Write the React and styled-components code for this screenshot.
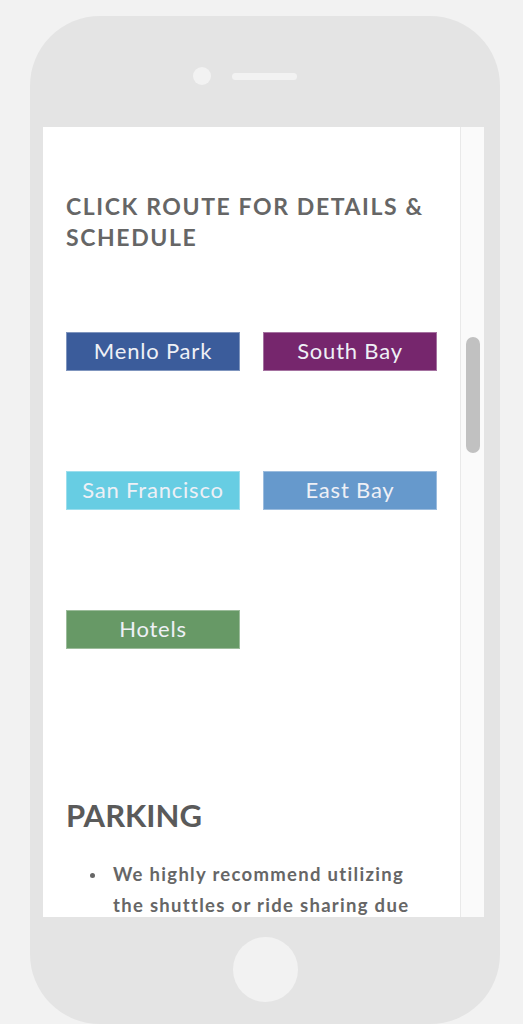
import React from "react";
import styled, { createGlobalStyle } from "styled-components";

const Global = createGlobalStyle`
  html, body { margin: 0; padding: 0; background: #f2f2f2; }
  body { overflow: hidden; height: 1024px; }
`;

const Phone = styled.div`
  margin: 16px 0 0 30px;
  width: 470px;
  height: 1008px;
  background: #e4e4e4;
  border-radius: 70px;
  display: flex;
  flex-direction: column;
  box-sizing: border-box;
`;

const TopBar = styled.div`
  height: 111px;
  display: flex;
  align-items: flex-start;
  padding: 51px 0 0 163px;
  box-sizing: border-box;
  gap: 21px;
`;

const Camera = styled.div`
  width: 18px;
  height: 18px;
  border-radius: 50%;
  background: #f2f2f2;
`;

const Speaker = styled.div`
  margin-top: 6px;
  width: 65px;
  height: 7px;
  border-radius: 4px;
  background: #f2f2f2;
`;

const Screen = styled.div`
  margin-left: 13px;
  width: 441px;
  height: 790px;
  display: flex;
  overflow: hidden;
`;

const Content = styled.div`
  flex: 1;
  background: #fff;
  padding: 64px 0 0 23px;
  box-sizing: border-box;
  font-family: "Lato", "Open Sans", sans-serif;
`;

const Track = styled.div`
  width: 24px;
  background: #fafafa;
  border-left: 1px solid #e9e9e9;
  box-sizing: border-box;
  padding: 210px 0 0 5px;
`;

const Thumb = styled.div`
  width: 14px;
  height: 116px;
  border-radius: 7px;
  background: #c1c1c1;
`;

const Heading = styled.h2`
  margin: 0;
  width: 385px;
  font-size: 23px;
  line-height: 31px;
  font-weight: 700;
  color: #666;
  letter-spacing: 1.6px;
`;

const Grid = styled.div`
  margin-top: 79px;
  display: grid;
  grid-template-columns: 174px 174px;
  column-gap: 23px;
  row-gap: 100px;
`;

const RouteButton = styled.a`
  display: flex;
  align-items: center;
  justify-content: center;
  height: 39px;
  padding-bottom: 3px;
  background: ${(p) => p.$bg};
  border: 1px solid rgba(255, 255, 255, 0.35);
  box-sizing: border-box;
  color: #eef0f6;
  font-size: 22px;
  font-weight: 400;
  letter-spacing: 0.8px;
  text-decoration: none;
  white-space: nowrap;
`;

const SectionTitle = styled.h2`
  margin: 146px 0 0 0;
  font-size: 31px;
  line-height: 40px;
  font-weight: 700;
  color: #5a5a5a;
`;

const List = styled.ul`
  margin: 24px 0 0 0;
  padding: 0 0 0 24px;
  list-style: none;
`;

const Item = styled.li`
  position: relative;
  padding-left: 23px;
  width: 305px;
  font-size: 18.5px;
  line-height: 31px;
  font-weight: 700;
  color: #666;
  letter-spacing: 1.3px;

  &::before {
    content: "";
    position: absolute;
    left: 0;
    top: 14px;
    width: 5px;
    height: 5px;
    border-radius: 50%;
    background: #666;
  }
`;

const Bottom = styled.div`
  flex: 1;
  display: flex;
  justify-content: center;
  padding-top: 20px;
  padding-left: 0px;
`;

const HomeButton = styled.div`
  width: 65px;
  height: 65px;
  border-radius: 50%;
  background: #f2f2f2;
`;

const routes = [
  { label: "Menlo Park", bg: "#3b5c9b" },
  { label: "South Bay", bg: "#76266d" },
  { label: "San Francisco", bg: "#67cde3" },
  { label: "East Bay", bg: "#6699cc" },
  { label: "Hotels", bg: "#679966" },
];

export default function App() {
  return (
    <>
      <Global />
      <Phone>
        <TopBar>
          <Camera />
          <Speaker />
        </TopBar>
        <Screen>
          <Content>
            <Heading>CLICK ROUTE FOR DETAILS &amp; SCHEDULE</Heading>
            <Grid>
              {routes.map((r) => (
                <RouteButton key={r.label} $bg={r.bg} href="#">
                  {r.label}
                </RouteButton>
              ))}
            </Grid>
            <SectionTitle>PARKING</SectionTitle>
            <List>
              <Item>
                We highly recommend utilizing the shuttles or ride sharing due
                to limited parking.
              </Item>
            </List>
          </Content>
          <Track>
            <Thumb />
          </Track>
        </Screen>
        <Bottom>
          <HomeButton />
        </Bottom>
      </Phone>
    </>
  );
}
